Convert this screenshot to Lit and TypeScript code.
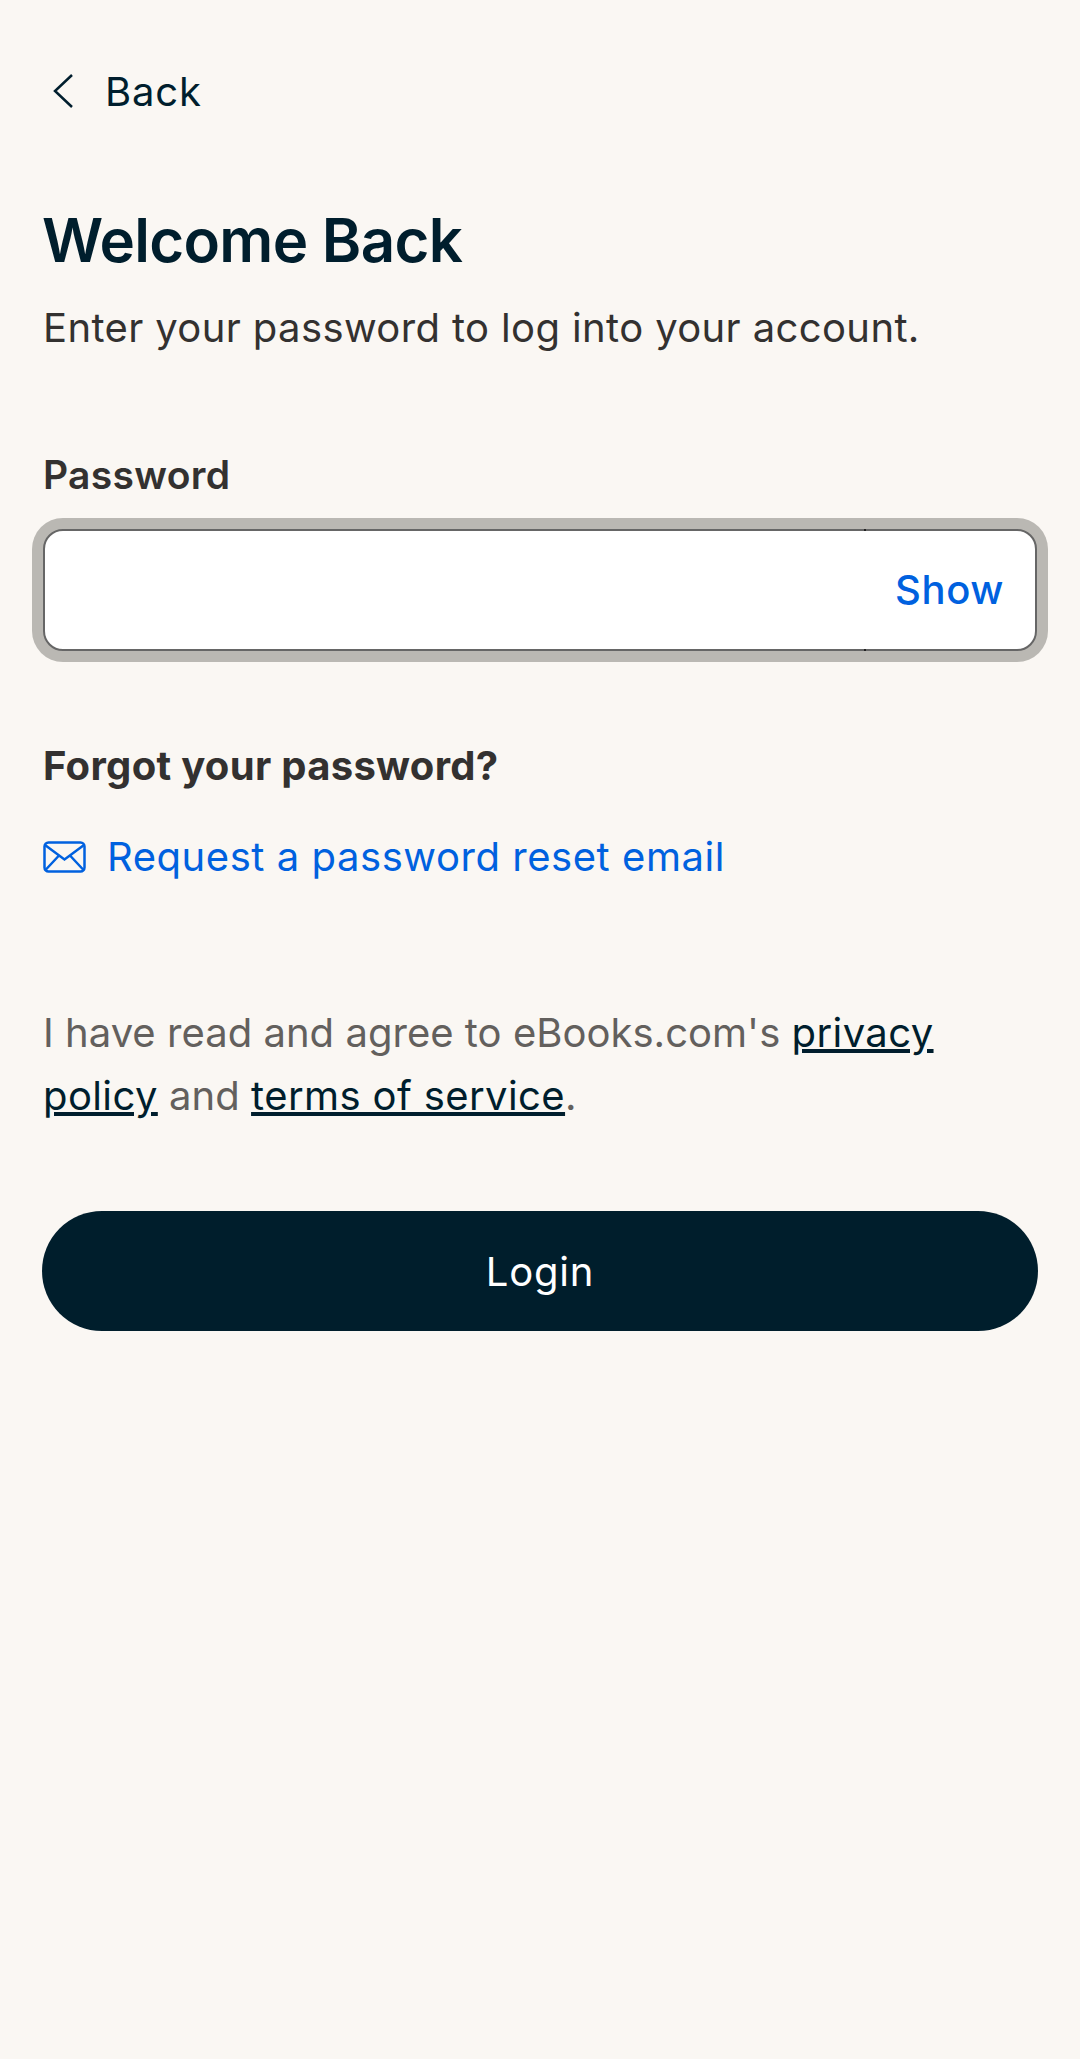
import { LitElement, html, css } from 'lit';
import { customElement } from 'lit/decorators.js';

@customElement('app-root')
export class AppRoot extends LitElement {
  static styles = css`
    :host {
      display: block;
      min-height: 2059px;
      background: #faf7f3;
      font-family: Inter, 'Liberation Sans', sans-serif;
      color: #333130;
    }
    .page {
      display: flex;
      flex-direction: column;
      padding: 0 42px;
    }
    .back {
      display: flex;
      align-items: center;
      gap: 30px;
      height: 60px;
      margin-top: 61px;
      padding-left: 10px;
      font-size: 40px;
      letter-spacing: 0.8px;
      color: #001e2d;
    }
    .back svg {
      width: 23px;
      height: 36px;
    }
    h1 {
      margin: 79px 0 0;
      font-size: 60px;
      line-height: 80px;
      font-weight: 600;
      letter-spacing: -0.7px;
      color: #001e2d;
    }
    .sub {
      margin: 20px 0 0 1px;
      font-size: 40px;
      line-height: 56px;
      letter-spacing: 0.38px;
    }
    .label {
      margin: 94px 0 0 1px;
      font-size: 39px;
      line-height: 50px;
      font-weight: 600;
      letter-spacing: 0.3px;
    }
    .field {
      position: relative;
      height: 122px;
      margin: 29px 1px 0;
      box-sizing: border-box;
      background: #fff;
      border: 2px solid #666;
      border-radius: 20px;
      box-shadow: 0 0 0 11px #bab8b3;
    }
    .field .show {
      position: absolute;
      top: 0;
      bottom: 2px;
      right: 31px;
      display: flex;
      align-items: center;
      font-size: 40px;
      font-weight: 500;
      letter-spacing: 0.6px;
      color: #0061df;
    }
    .tick {
      position: absolute;
      left: 819px;
      width: 2px;
      height: 2px;
      background: #222;
    }
    .tick.top { top: -2px; }
    .tick.bottom { bottom: -2px; }
    h2 {
      margin: 90px 0 0 1px;
      font-size: 40px;
      line-height: 50px;
      font-weight: 700;
      letter-spacing: 0.3px;
    }
    .reset {
      display: flex;
      align-items: center;
      gap: 21px;
      margin: 41px 0 0 1px;
      font-size: 40px;
      line-height: 50px;
      letter-spacing: 0.55px;
      color: #0061df;
    }
    .reset svg {
      width: 43px;
      height: 32px;
    }
    .terms {
      margin: 119px 0 0 1px;
      font-size: 40px;
      line-height: 63px;
      letter-spacing: 0.03px;
      color: #63605d;
    }
    .terms a {
      color: #001e2d;
      text-decoration: underline;
      letter-spacing: 0.4px;
    }
    .login {
      display: flex;
      align-items: center;
      justify-content: center;
      height: 120px;
      margin-top: 84px;
      border-radius: 60px;
      background: #001e2c;
      color: #fff;
      font-size: 40px;
      letter-spacing: 0.8px;
    }
  `;

  render() {
    return html`
      <div class="page">
        <div class="back">
          <svg viewBox="0 0 23 36" fill="none" stroke="#001e2d" stroke-width="2.5">
            <path d="M20 2 3 18l17 16" />
          </svg>
          <span>Back</span>
        </div>
        <h1>Welcome Back</h1>
        <p class="sub">Enter your password to log into your account.</p>
        <div class="label">Password</div>
        <div class="field">
          <i class="tick top"></i>
          <i class="tick bottom"></i>
          <span class="show">Show</span>
        </div>
        <h2>Forgot your password?</h2>
        <div class="reset">
          <svg viewBox="0 0 43 32" fill="none" stroke="#0061df" stroke-width="2.5">
            <rect x="1.5" y="1.5" width="40" height="29" rx="4" />
            <path d="M2 4l19.5 14.500L41 4M2 29.500l14-15M41 29.500l-14-15" />
          </svg>
          <span>Request a password reset email</span>
        </div>
        <p class="terms">
          I have read and agree to eBooks.com's <a>privacy policy</a> and <a>terms of service</a>.
        </p>
        <div class="login">Login</div>
      </div>
    `;
  }
}
